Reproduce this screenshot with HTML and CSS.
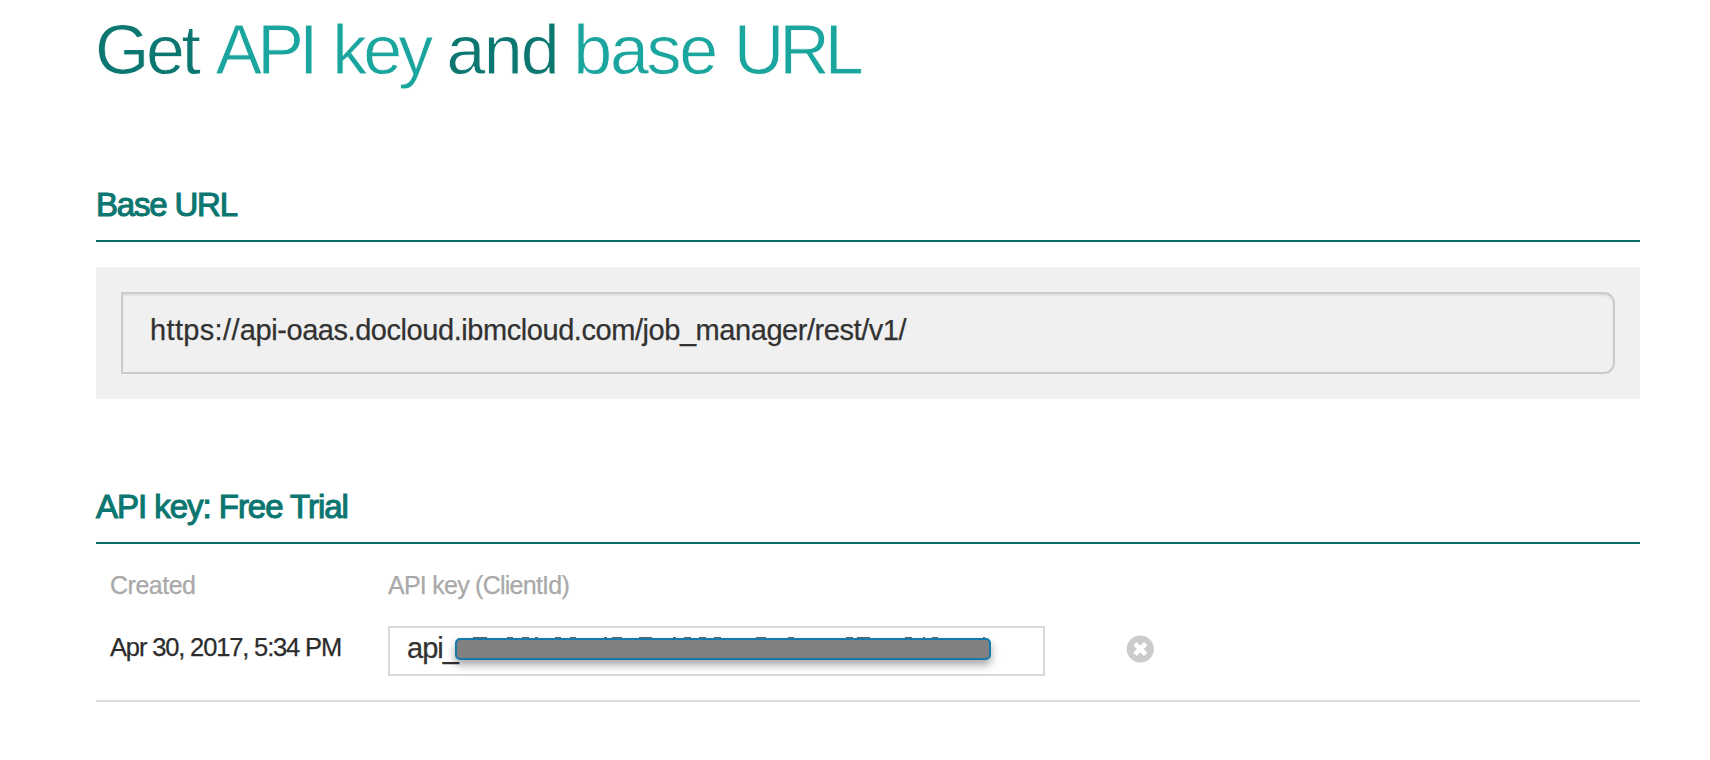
FILE: index.html
```html
<!DOCTYPE html>
<html lang="en">
<head>
<meta charset="utf-8">
<title>Get API key and base URL</title>
<link rel="stylesheet" href="styles.css">
</head>
<body>
<main class="page">
  <h1 class="title"><span class="get">Get</span> <span class="accent api">API</span> <span class="accent key">key</span> <span class="and">and</span> <span class="accent base">base</span> <span class="accent url">URL</span></h1>

  <section class="section">
    <h2 class="heading heading-base">Base URL</h2>
    <div class="panel">
      <div class="url-box"><span class="scheme">https://</span><span class="url-text">api-oaas.docloud.ibmcloud.com/job_manager/rest/v1/</span></div>
    </div>
  </section>

  <section class="section">
    <h2 class="heading heading-key">API key: Free Trial</h2>
    <div class="table">
      <div class="label"><span class="created">Created</span></div>
      <div class="label"><span class="client">API key (ClientId)</span></div>
      <div></div>
      <div class="date"><span class="date-text">Apr 30, 2017, 5:34 PM</span></div>
      <div class="key-box">
        <span class="key-text">api_</span>
        <svg class="marks" width="536" height="1" viewBox="457 0 536 1"><path d="M473 .5h14M507 .5h6M522 .5h7M535 .5h3M555 .5h6M570 .5h6M604 .5h3M612 .5h10M639 .5h13M673 .5h3M684 .5h7M699 .5h7M714 .5h7M756 .5h10M788 .5h6M846 .5h7M857 .5h13M905 .5h7M923 .5h2M932 .5h6M983 .5h2"/></svg>
        <span class="redaction"></span>
      </div>
      <button class="remove" aria-label="Delete API key">
        <svg width="28" height="28" viewBox="0 0 28 28"><circle cx="14.3" cy="14" r="13.6" fill="#cbcbcb"/><path d="M8.9 8.6l10.8 10.8M19.7 8.6l-10.8 10.8" stroke="#fff" stroke-width="4.8"/></svg>
      </button>
    </div>
  </section>
</main>
</body>
</html>
```
FILE: styles.css
```css
* { box-sizing: border-box; }
body { margin: 0; background: #fff; color: #323232; font-family: "Liberation Sans", sans-serif; }
.page { width: 1640px; padding: 10px 0 0 96px; }
.title { margin: 0 0 0 -1px; height: 170px; font: 400 70px/81px "Liberation Sans", sans-serif; color: #0c7670; white-space: nowrap; letter-spacing: -2.3px; -webkit-text-stroke: .8px #fff; }
.accent { color: #1aa69e; }
.get { letter-spacing: -3.4px; margin-right: .8px; }
.api { letter-spacing: -5px; margin-right: 1.6px; }
.key { letter-spacing: -3.9px; margin-right: 0; }
.and { letter-spacing: -1.8px; margin-right: -1.8px; }
.base { margin-right: .6px; }
.url { letter-spacing: -5px; }
.section { height: 302px; }
.heading { margin: 0; height: 62px; padding-top: 5px; border-bottom: 2px solid #0b6b65; font: 400 33px/40px "Liberation Sans", sans-serif; -webkit-text-stroke: 1.1px #0c7670; color: #0c7670; letter-spacing: -1.2px; white-space: nowrap; }
.heading-key { letter-spacing: -1.03px; }
.panel { margin-top: 25px; height: 132px; padding: 25px; background: #f0f0f0; }
.url-box { height: 82px; padding-left: 27px; border: 2px solid #cbcbcb; border-radius: 0 11px 11px 0; box-shadow: inset 0 2px 2px rgba(0,0,0,.07); font-size: 29px; line-height: 72px; white-space: nowrap; letter-spacing: -.44px; -webkit-text-stroke: .25px #323232; }
.scheme { letter-spacing: .35px; }
.table { display: grid; grid-template-columns: 278px 657px 1fr; grid-template-rows: 82px 74px; padding-left: 14px; border-bottom: 2px solid #dcdcdc; }
.label { padding-top: 25px; color: #a9a9a9; font-size: 25px; line-height: 32px; letter-spacing: -.75px; -webkit-text-stroke: .25px #a9a9a9; }
.created { letter-spacing: -.5px; }
.date { padding-top: 5px; font-size: 25.5px; line-height: 32px; letter-spacing: -1.15px; color: #2c2c2c; -webkit-text-stroke: .25px #2c2c2c; }
.key-box { position: relative; width: 657px; height: 50px; padding-left: 17px; border: 2px solid #d9d9d9; font-size: 29px; line-height: 41px; letter-spacing: -1px; -webkit-text-stroke: .25px #323232; }
.marks { position: absolute; left: 67px; top: 9px; stroke: #666; stroke-width: 1; }
.redaction { position: absolute; left: 65px; top: 10px; width: 536px; height: 22px; background: #808080; border: 2px solid #147aaa; border-radius: 5px; box-shadow: 0 5px 8px rgba(0,0,0,.35); }
.remove { margin: 9px 0 0 81px; padding: 0; width: 28px; height: 28px; border: 0; background: none; }
.remove svg { display: block; }
```
